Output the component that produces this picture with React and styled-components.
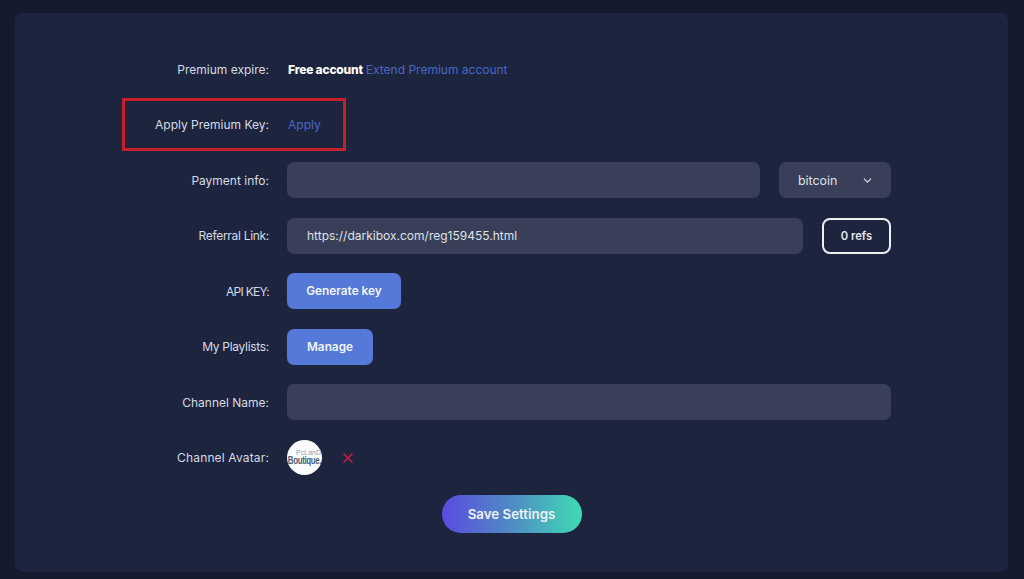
import React from 'react'
import styled, { createGlobalStyle } from 'styled-components'
import { ChevronDown, X } from 'lucide-react'

const GlobalStyle = createGlobalStyle`
  html, body { margin: 0; padding: 0; background: #151b2f; }
  body { font-family: "Inter", "Liberation Sans", sans-serif; }
`

const Page = styled.div`
  width: 1024px;
  height: 579px;
  box-sizing: border-box;
  padding: 13px 16px 7px 15px;
  overflow: hidden;
`

const Panel = styled.div`
  height: 100%;
  box-sizing: border-box;
  background: #1c243e;
  border-radius: 8px;
  padding: 38.4px 117px 0 0;
  display: flex;
  flex-direction: column;
  gap: 19.45px;
`

const Row = styled.div`
  position: relative;
  display: grid;
  grid-template-columns: 254px 1fr;
  column-gap: 18px;
  align-items: center;
  height: 36px;
`

const Label = styled.div`
  text-align: right;
  font-size: 12px;
  color: #d8dbe4;
  white-space: nowrap;
  letter-spacing: ${p => p.$track || 0}px;
`

const Controls = styled.div`
  display: flex;
  align-items: center;
  gap: ${p => p.$gap || 19}px;
  font-size: 12px;
`

const Strong = styled.span`
  color: #fff;
  font-weight: 800;
  letter-spacing: -0.2px;
  margin-left: 1px;
`

const TextLink = styled.a`
  color: #4b67c6;
  text-decoration: none;
  margin-left: ${p => (p.$inset ? 1 : 0)}px;
`

const Highlight = styled.div`
  position: absolute;
  left: 107px;
  top: -9px;
  width: 224px;
  height: 53px;
  box-sizing: border-box;
  border: 3px solid #c5202c;
`

const Field = styled.div`
  flex: 1;
  height: 36px;
  box-sizing: border-box;
  padding: 0 20px;
  display: flex;
  align-items: center;
  background: #393f58;
  border-radius: 7px;
  color: #dfe2ea;
  font-size: 12px;
`

const Select = styled.div`
  width: 112px;
  height: 36px;
  box-sizing: border-box;
  padding: 0 17px 0 19px;
  display: flex;
  align-items: center;
  justify-content: space-between;
  background: #393f58;
  border-radius: 7px;
  color: #dfe2ea;
  font-size: 12.4px;
`

const RefBadge = styled.div`
  width: 69px;
  height: 36px;
  box-sizing: border-box;
  display: flex;
  align-items: center;
  justify-content: center;
  border: 2px solid #eef0f5;
  border-radius: 8px;
  color: #e6e9f0;
  font-size: 11.2px;
  font-weight: 600;
`

const Button = styled.button`
  width: ${p => p.$width}px;
  height: 36px;
  border: 0;
  border-radius: 7px;
  background: #5479d8;
  color: #f1f4fb;
  font-family: inherit;
  font-size: 11.8px;
  font-weight: 600;
`

const Avatar = styled.div`
  width: 35px;
  height: 35px;
  border-radius: 50%;
  background: #fbfcfd;
  display: flex;
  flex-direction: column;
  align-items: center;
  justify-content: center;
  overflow: hidden;
  line-height: 8px;
  font-family: "Liberation Sans", sans-serif;
`

const AvatarTop = styled.span`
  font-size: 7px;
  color: #8fa5ba;
  align-self: flex-end;
  margin-right: 1px;
`

const AvatarBottom = styled.span`
  font-size: 8px;
  color: #4a5f75;
  font-weight: 700;
  letter-spacing: -0.4px;
  transform: scaleY(1.3);
`

const Remove = styled.span`
  display: flex;
  color: #cc1f48;
  margin-left: -1px;
  margin-top: 1px;
`

const Footer = styled.div`
  display: flex;
  justify-content: center;
  width: 993px;
`

const SaveButton = styled.button`
  width: 140px;
  height: 38px;
  border: 0;
  border-radius: 19px;
  background: linear-gradient(90deg, #5b4bdf 0%, #4f8cc4 50%, #3edbb3 100%);
  color: #eef1fb;
  font-family: inherit;
  font-size: 13.3px;
  font-weight: 600;
`

const App = () => {
  return (
    <Page>
      <GlobalStyle />
      <Panel>
        <Row>
          <Label>Premium expire:</Label>
          <Controls $gap={3}>
            <Strong>Free account</Strong>
            <TextLink href="#">Extend Premium account</TextLink>
          </Controls>
        </Row>
        <Row>
          <Highlight />
          <Label>Apply Premium Key:</Label>
          <Controls>
            <TextLink href="#" $inset>Apply</TextLink>
          </Controls>
        </Row>
        <Row>
          <Label>Payment info:</Label>
          <Controls>
            <Field />
            <Select>
              bitcoin
              <ChevronDown size={13} strokeWidth={2} />
            </Select>
          </Controls>
        </Row>
        <Row>
          <Label $track={-0.3}>Referral Link:</Label>
          <Controls>
            <Field>https://darkibox.com/reg159455.html</Field>
            <RefBadge>0 refs</RefBadge>
          </Controls>
        </Row>
        <Row>
          <Label $track={-0.7}>API KEY:</Label>
          <Controls>
            <Button $width={114}>Generate key</Button>
          </Controls>
        </Row>
        <Row>
          <Label $track={-0.3}>My Playlists:</Label>
          <Controls>
            <Button $width={86}>Manage</Button>
          </Controls>
        </Row>
        <Row>
          <Label>Channel Name:</Label>
          <Controls>
            <Field />
          </Controls>
        </Row>
        <Row>
          <Label $track={0.15}>Channel Avatar:</Label>
          <Controls>
            <Avatar>
              <AvatarTop>PcLanD</AvatarTop>
              <AvatarBottom>Boutique,</AvatarBottom>
            </Avatar>
            <Remove>
              <X size={16} strokeWidth={2.4} />
            </Remove>
          </Controls>
        </Row>
        <Footer>
          <SaveButton>Save Settings</SaveButton>
        </Footer>
      </Panel>
    </Page>
  )
}

export default App
